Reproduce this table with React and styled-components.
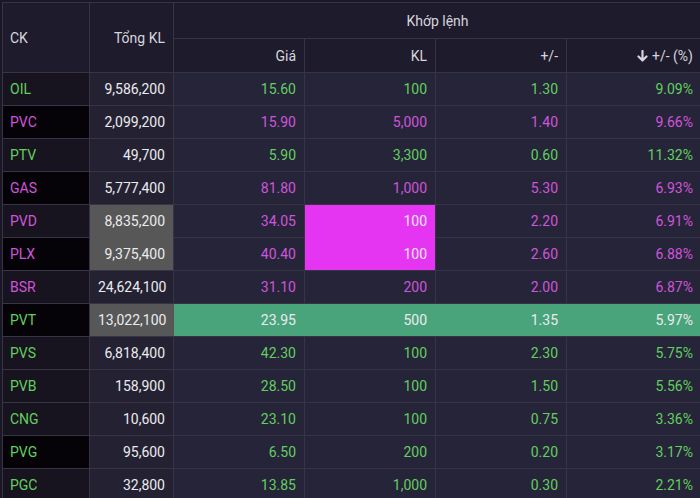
import React from 'react'
import styled, { createGlobalStyle } from 'styled-components'

const GlobalStyle = createGlobalStyle`
  html, body {
    margin: 0;
    padding: 0;
    background: #1b1826;
    font-family: Roboto, "Noto Sans", sans-serif;
  }
`

const GREEN = '#62cf5f'
const PURPLE = '#cf55dc'
const WHITE = '#ebebef'
const FLASH_GREEN = '#49a47b'
const FLASH_PINK = '#e535f3'

const rows = [
    { ck: 'OIL', total: '9,586,200', price: '15.60', kl: '100', chg: '1.30', pct: '9.09%', c: GREEN },
    { ck: 'PVC', total: '2,099,200', price: '15.90', kl: '5,000', chg: '1.40', pct: '9.66%', c: PURPLE, dark: true },
    { ck: 'PTV', total: '49,700', price: '5.90', kl: '3,300', chg: '0.60', pct: '11.32%', c: GREEN },
    { ck: 'GAS', total: '5,777,400', price: '81.80', kl: '1,000', chg: '5.30', pct: '6.93%', c: PURPLE, dark: true },
    { ck: 'PVD', total: '8,835,200', price: '34.05', kl: '100', chg: '2.20', pct: '6.91%', c: PURPLE, totalHl: true, klHl: true },
    { ck: 'PLX', total: '9,375,400', price: '40.40', kl: '100', chg: '2.60', pct: '6.88%', c: PURPLE, dark: true, totalHl: true, klHl: true },
    { ck: 'BSR', total: '24,624,100', price: '31.10', kl: '200', chg: '2.00', pct: '6.87%', c: PURPLE },
    { ck: 'PVT', total: '13,022,100', price: '23.95', kl: '500', chg: '1.35', pct: '5.97%', c: GREEN, dark: true, totalHl: true, rowHl: true },
    { ck: 'PVS', total: '6,818,400', price: '42.30', kl: '100', chg: '2.30', pct: '5.75%', c: GREEN },
    { ck: 'PVB', total: '158,900', price: '28.50', kl: '100', chg: '1.50', pct: '5.56%', c: GREEN },
    { ck: 'CNG', total: '10,600', price: '23.10', kl: '100', chg: '0.75', pct: '3.36%', c: GREEN },
    { ck: 'PVG', total: '95,600', price: '6.50', kl: '200', chg: '0.20', pct: '3.17%', c: GREEN, dark: true },
    { ck: 'PGC', total: '32,800', price: '13.85', kl: '1,000', chg: '0.30', pct: '2.21%', c: GREEN },
]

const DownArrow = () => (
    <svg width="11" height="12" viewBox="0 0 11 12" style={{ marginRight: 4, verticalAlign: '-1px' }}>
        <path d="M5.5 1 V10 M1.5 6.5 L5.5 10.5 L9.5 6.5" stroke="currentColor" strokeWidth="2.2" fill="none" strokeLinecap="round" strokeLinejoin="round" />
    </svg>
)

const App = () => {
    return (
        <>
            <GlobalStyle />
            <Board>
                <Table>
                    <colgroup>
                        <col style={{ width: 87 }} />
                        <col style={{ width: 84 }} />
                        <col style={{ width: 131 }} />
                        <col style={{ width: 131 }} />
                        <col style={{ width: 131 }} />
                        <col />
                    </colgroup>
                    <thead>
                        <tr className="top">
                            <Th rowSpan={2} $left>CK</Th>
                            <Th rowSpan={2}>Tổng KL</Th>
                            <Th colSpan={4} $center>Khớp lệnh</Th>
                        </tr>
                        <tr className="sub">
                            <Th>Giá</Th>
                            <Th>KL</Th>
                            <Th>+/-</Th>
                            <Th><DownArrow />+/- (%)</Th>
                        </tr>
                    </thead>
                    <tbody>
                        {rows.map(r => {
                            const rowBg = r.rowHl ? FLASH_GREEN : null
                            const textColor = r.rowHl ? WHITE : r.c
                            return (
                                <tr key={r.ck}>
                                    <Code $color={r.c} $dark={r.dark}>{r.ck}</Code>
                                    <Total $hl={r.totalHl}>{r.total}</Total>
                                    <Cell $color={textColor} $bg={rowBg}>{r.price}</Cell>
                                    <Cell $color={r.klHl ? WHITE : textColor} $bg={r.klHl ? FLASH_PINK : rowBg}>{r.kl}</Cell>
                                    <Cell $color={textColor} $bg={rowBg}>{r.chg}</Cell>
                                    <Cell $color={textColor} $bg={rowBg}>{r.pct}</Cell>
                                </tr>
                            )
                        })}
                    </tbody>
                </Table>
            </Board>
        </>
    )
}

export default App

const Board = styled.div`
    width: 700px;
    height: 498px;
    overflow: hidden;
    padding: 2px 0 0 2px;
    box-sizing: border-box;
    background: #1b1826;
`

const Table = styled.table`
    width: 700px;
    border-collapse: collapse;
    table-layout: fixed;
    font-size: 14px;

    tr.top th {
        height: 35px;
    }

    tr.sub th {
        height: 33px;
    }

    td {
        height: 32px;
        padding: 0 8px;
        border: 1px solid #373446;
        text-align: right;
        white-space: nowrap;
    }
`

const Th = styled.th`
    background: #1e1b2c;
    color: #d6d5de;
    font-weight: 400;
    padding: 0 8px 0 ${p => (p.$left ? '7px' : '8px')};
    border: 1px solid #373446;
    text-align: ${p => (p.$left ? 'left' : p.$center ? 'center' : 'right')};
    white-space: nowrap;
`

const Code = styled.td`
    && {
        text-align: left;
        padding-left: 7px;
        background: ${p => (p.$dark ? '#050308' : '#17131f')};
        color: ${p => p.$color};
    }
`

/* flashed cells use a dashed border in their own colour: solid grid lines win
   against them, but two flashed neighbours merge into one block */
const Total = styled.td`
    && {
        background: ${p => (p.$hl ? '#575757' : '#242232')};
        color: ${WHITE};
        ${p => p.$hl && 'border: 1px dashed #575757;'}
    }
`

const Cell = styled.td`
    && {
        background: ${p => p.$bg || '#262438'};
        color: ${p => p.$color};
        ${p => p.$bg && `border: 1px dashed ${p.$bg};`}
    }
`
